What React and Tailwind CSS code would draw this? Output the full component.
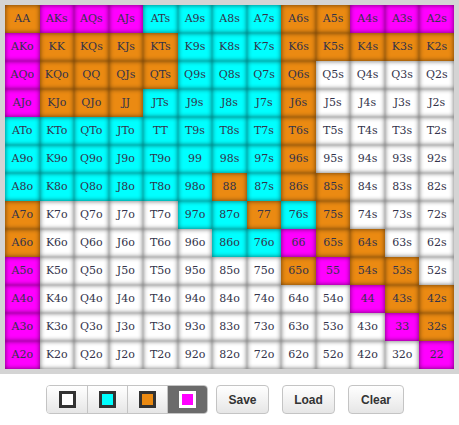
import React, { useState } from "react";

const RANKS = ["A", "K", "Q", "J", "T", "9", "8", "7", "6", "5", "4", "3", "2"];

// colour per cell, row by row: O orange, C cyan, M magenta, W white
const MAP = [
  "OMMMCCCCOOMMM",
  "MOOOOCCCOOOOO",
  "MOOOOCCCOWWWW",
  "MOOOCCCCOWWWW",
  "CCCCCCCCOWWWW",
  "CCCCCCCCOWWWW",
  "CCCCCCOCOOWWW",
  "OWWWWCCOCOWWW",
  "OWWWWWCCMOOWW",
  "MWWWWWWWOMOOW",
  "MWWWWWWWWWMOO",
  "MWWWWWWWWWWMO",
  "MWWWWWWWWWWWM",
];

const CELL_BG = {
  O: "bg-[#eb8a12]",
  C: "bg-[#00ffff]",
  M: "bg-[#ff00ff]",
  W: "bg-white",
};

const handName = (r, c) => {
  if (r === c) return RANKS[r] + RANKS[c];
  if (c > r) return RANKS[r] + RANKS[c] + "s";
  return RANKS[c] + RANKS[r] + "o";
};

const SWATCHES = [
  { key: "W", fill: "bg-white" },
  { key: "C", fill: "bg-[#00ffff]" },
  { key: "O", fill: "bg-[#eb8a12]" },
  { key: "M", fill: "bg-[#ff00ff]" },
];

const App = () => {
  const [selected, setSelected] = useState("M");

  return (
    <div className="w-[459px] h-[425px] bg-white font-['Liberation_Sans',Arial,sans-serif]">
      {/* Range grid */}
      <div className="border-[5px] border-[#d4d4d4] w-[459px]">
        <div className="grid grid-cols-13 w-[449px]">
          {MAP.map((row, r) =>
            row.split("").map((c, col) => (
              <div
                key={`${r}-${col}`}
                className={`${CELL_BG[c]} h-[28px] flex items-center justify-center text-[11px] text-[#33334a] font-['DejaVu_Serif',serif] shadow-[inset_0_0_5px_rgba(0,0,0,0.6)]`}
              >
                {handName(r, col)}
              </div>
            ))
          )}
        </div>
      </div>

      {/* Controls */}
      <div className="flex items-center mt-[11px] pl-[46px]">
        <div className="flex h-[29px] border border-[#c4c4c4] rounded-[4px] overflow-hidden">
          {SWATCHES.map((s, i) => {
            const active = selected === s.key;
            return (
              <button
                key={s.key}
                type="button"
                onClick={() => setSelected(s.key)}
                className={`w-[40px] h-full flex items-center justify-center ${
                  i > 0 ? "border-l border-[#c4c4c4]" : ""
                } ${
                  active
                    ? "bg-[#6b6b6b]"
                    : "bg-gradient-to-b from-white to-[#e6e6e6]"
                }`}
              >
                <span
                  className={`w-[17px] h-[17px] border-[3px] ${
                    active ? "border-white" : "border-[#333]"
                  } ${s.fill}`}
                />
              </button>
            );
          })}
        </div>
        <button
          type="button"
          className="ml-[8px] w-[53px] h-[29px] border border-[#c4c4c4] rounded-[4px] bg-gradient-to-b from-white to-[#e6e6e6] text-[12px] font-bold text-[#333]"
        >
          Save
        </button>
        <button
          type="button"
          className="ml-[13px] w-[53px] h-[29px] border border-[#c4c4c4] rounded-[4px] bg-gradient-to-b from-white to-[#e6e6e6] text-[12px] font-bold text-[#333]"
        >
          Load
        </button>
        <button
          type="button"
          className="ml-[13px] w-[56px] h-[29px] border border-[#c4c4c4] rounded-[4px] bg-gradient-to-b from-white to-[#e6e6e6] text-[12px] font-bold text-[#333]"
        >
          Clear
        </button>
      </div>
    </div>
  );
};

export default App;
